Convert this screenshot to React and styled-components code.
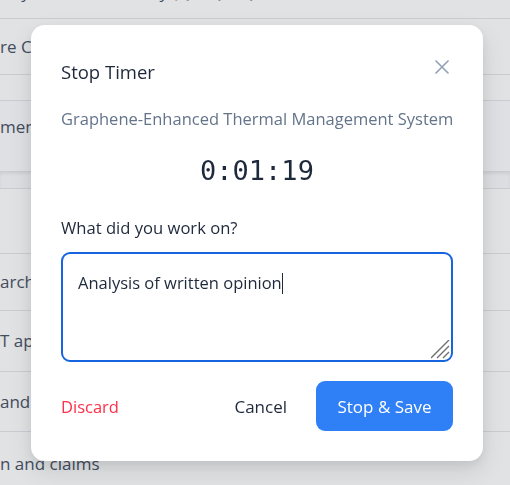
import React from "react";
import styled, { createGlobalStyle } from "styled-components";

const GlobalStyle = createGlobalStyle`
  html, body {
    margin: 0;
    padding: 0;
    background: #f9fafb;
    font-family: "Open Sans", "Noto Sans", sans-serif;
    overflow: hidden;
  }
`;

const Page = styled.div`
  width: 510px;
  height: 485px;
  overflow: hidden;
  background: #fff;
`;

const Row = styled.div`
  height: ${(props) => props.h}px;
  box-sizing: border-box;
  display: flex;
  align-items: ${(props) => (props.top ? "flex-start" : "center")};
  border-bottom: 1px solid #e4e7eb;
  background: ${(props) => props.bg || "#fff"};
  color: #4b5567;
  font-size: 17px;
  line-height: 24px;
  white-space: nowrap;
  margin-top: ${(props) => props.mt || 0}px;
  padding-top: ${(props) => props.pt || 0}px;
`;

const Cell = styled.span`
  display: block;
  width: ${(props) => props.w || 31}px;
  overflow: hidden;
`;

const Band = styled.div`
  height: 17px;
  background: #fafbfc;
  box-shadow: inset 0 2px 3px rgba(0, 0, 0, 0.07);
  border-bottom: 1px solid #e4e7eb;
  box-sizing: border-box;
`;

const Overlay = styled.div`
  position: fixed;
  inset: 0;
  background: rgba(17, 24, 39, 0.125);
  display: flex;
  align-items: flex-start;
  padding: 25px 0 0 31px;
`;

const Modal = styled.div`
  width: 452px;
  height: 436px;
  box-sizing: border-box;
  background: #fff;
  border-radius: 14px;
  box-shadow: 0 10px 25px rgba(0, 0, 0, 0.1), 0 4px 10px rgba(0, 0, 0, 0.06);
  padding: 33px 30px 30px;
  display: flex;
  flex-direction: column;
`;

const Header = styled.div`
  display: flex;
  justify-content: space-between;
  align-items: center;
  height: 28px;
`;

const Title = styled.h2`
  margin: 0;
  font-size: 18.5px;
  font-weight: 400;
  line-height: 28px;
  color: #1e293b;
`;

const CloseButton = styled.button`
  border: none;
  background: none;
  padding: 0;
  margin: -10px 4px 0 0;
  width: 14px;
  height: 14px;
  display: flex;
  cursor: pointer;
`;

const Subtitle = styled.div`
  margin-top: 21px;
  font-size: 16.5px;
  line-height: 24px;
  color: #64748b;
  white-space: nowrap;
`;

const Timer = styled.div`
  margin-top: 22px;
  text-align: center;
  font-family: "DejaVu Sans Mono", "Liberation Mono", monospace;
  font-size: 27px;
  line-height: 36px;
  color: #1e293b;
`;

const Label = styled.label`
  margin-top: 27px;
  font-size: 16.6px;
  line-height: 24px;
  color: #1e293b;
`;

const TextBox = styled.div`
  position: relative;
  margin-top: 12px;
  height: 110px;
  box-sizing: border-box;
  border: 2px solid #1664e0;
  border-radius: 9px;
  padding: 17px 15px;
  font-size: 16.5px;
  line-height: 24px;
  color: #1e293b;
`;

const Caret = styled.span`
  display: inline-block;
  width: 1px;
  height: 21px;
  background: #1e293b;
  vertical-align: -5px;
`;

const Grip = styled.svg`
  position: absolute;
  right: 0;
  bottom: 0;
`;

const Actions = styled.div`
  margin-top: 19px;
  display: flex;
  align-items: center;
  justify-content: space-between;
`;

const Right = styled.div`
  display: flex;
  align-items: center;
  gap: 15px;
`;

const TextButton = styled.button`
  border: none;
  background: none;
  padding: 0 ${(props) => props.px || 0}px;
  font-family: inherit;
  font-size: ${(props) => props.size || 17}px;
  color: ${(props) => props.color};
  cursor: pointer;
`;

const PrimaryButton = styled.button`
  width: 137px;
  height: 50px;
  border: none;
  border-radius: 9px;
  background: #2f7ff7;
  color: #fff;
  font-family: inherit;
  font-size: 17px;
  cursor: pointer;
`;

export default function App() {
  return (
    <>
      <GlobalStyle />
      <Page>
        <Row h={39} mt={-20} top>
          <Cell w={260}>Aby Matter Summary (Q1, Q2, Q3)</Cell>
        </Row>
        <Row h={56}>
          <Cell>re Compliance Review</Cell>
        </Row>
        <Row h={26} />
        <Row h={71} top pt={14} bg="#fdfdfe">
          <Cell>mention of the hearing</Cell>
        </Row>
        <Band />
        <Row h={65} />
        <Row h={57}>
          <Cell>arch on precedents</Cell>
        </Row>
        <Row h={61}>
          <Cell>T application draft</Cell>
        </Row>
        <Row h={60}>
          <Cell>and review</Cell>
        </Row>
        <Row h={64}>n and claims</Row>
      </Page>
      <Overlay>
        <Modal>
          <Header>
            <Title>Stop Timer</Title>
            <CloseButton aria-label="Close">
              <svg width="14" height="14" viewBox="0 0 14 14">
                <path
                  d="M1 1L13 13M13 1L1 13"
                  stroke="#94a3b8"
                  strokeWidth="1.7"
                  strokeLinecap="round"
                />
              </svg>
            </CloseButton>
          </Header>
          <Subtitle>Graphene-Enhanced Thermal Management System</Subtitle>
          <Timer>0:01:19</Timer>
          <Label>What did you work on?</Label>
          <TextBox>
            Analysis of written opinion
            <Caret />
            <Grip width="20" height="20" viewBox="0 0 20 20">
              <path
                d="M0 18L18 0M6 18L18 6M12 18L18 12"
                stroke="#707070"
                strokeWidth="1.4"
              />
            </Grip>
          </TextBox>
          <Actions>
            <TextButton color="#ff2f48" size={16.5}>
              Discard
            </TextButton>
            <Right>
              <TextButton color="#1e293b" px={14}>
                Cancel
              </TextButton>
              <PrimaryButton>Stop &amp; Save</PrimaryButton>
            </Right>
          </Actions>
        </Modal>
      </Overlay>
    </>
  );
}
